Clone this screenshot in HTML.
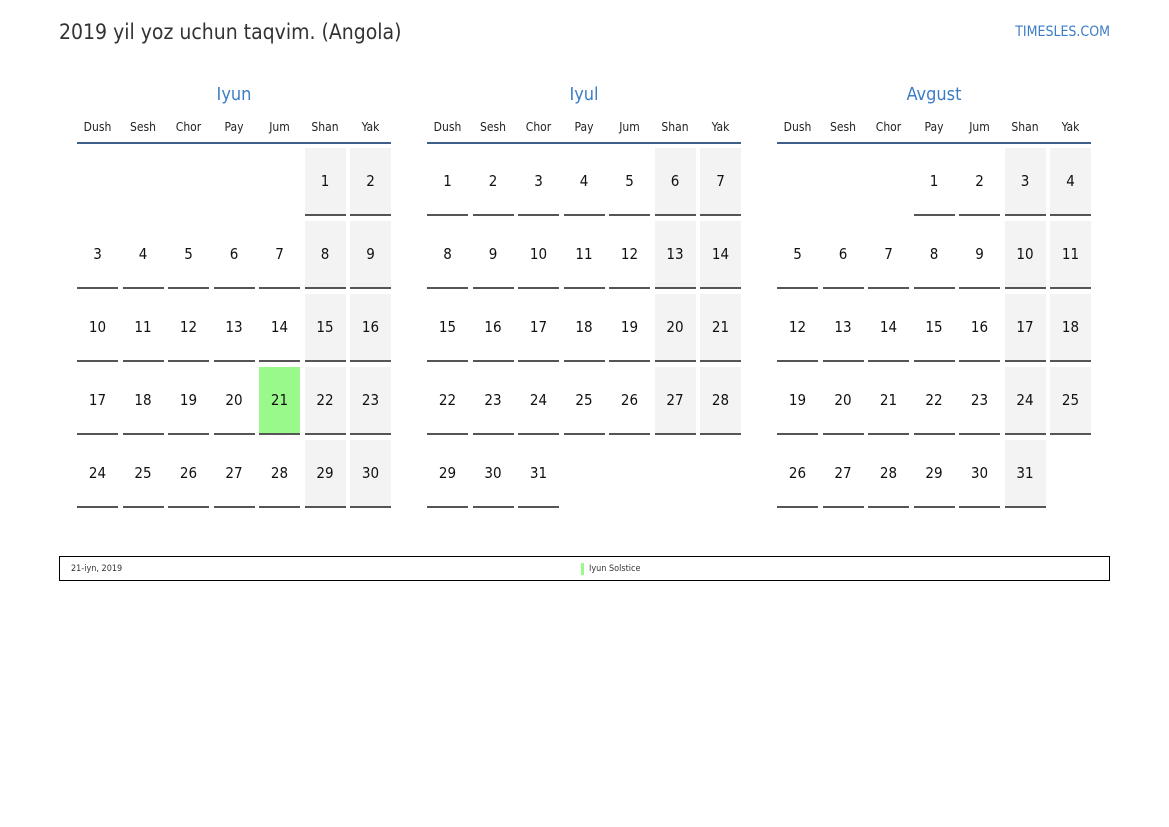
<!DOCTYPE html>
<html><head><meta charset="utf-8"><style>
body{margin:0;width:1169px;height:827px;background:#fff;font-family:"DejaVu Sans","Liberation Sans",sans-serif;font-stretch:condensed;position:relative;overflow:hidden}
.title{position:absolute;left:59px;top:20px;font-size:21px;color:#333}
.logo{position:absolute;right:59px;top:24px;font-size:14px;color:#3b7dc4}
.m{position:absolute;top:84px;width:314px}
.mn{text-align:center;font-size:18px;color:#3b7dc4;height:22px;line-height:22px}
.dn{display:grid;grid-template-columns:repeat(7,41px);column-gap:4.5px;margin-top:9px;font-size:12px;color:#222;height:27px;line-height:24px;border-bottom:2px solid #3d5f8a}
.dn div{text-align:center}
.g{display:grid;grid-template-columns:repeat(7,41px);grid-auto-rows:68px;gap:5px 4.5px;margin-top:4px}
.g div{text-align:center;line-height:66px;font-size:15px;color:#111;border-bottom:2px solid #555}
.g div.e{border:none}
.g div.w{background:#f3f3f3}
.g div.h{background:#99f98a}
.foot{position:absolute;left:59px;top:556px;width:1049px;height:23px;border:1px solid #000;font-size:9px;color:#333}
.foot .a{position:absolute;left:11px;top:7px}
.foot .b{position:absolute;left:521px;padding-left:5px;border-left:3px solid #99f98a;line-height:12px;top:6px}
</style></head><body>
<div class="title">2019 yil yoz uchun taqvim. (Angola)</div>
<div class="logo">TIMESLES.COM</div>

<div class="m" style="left:77px"><div class="mn">Iyun</div>
<div class="dn"><div>Dush</div><div>Sesh</div><div>Chor</div><div>Pay</div><div>Jum</div><div>Shan</div><div>Yak</div></div>
<div class="g">
<div class="e"></div><div class="e"></div><div class="e"></div><div class="e"></div><div class="e"></div><div class="w">1</div><div class="w">2</div>
<div>3</div><div>4</div><div>5</div><div>6</div><div>7</div><div class="w">8</div><div class="w">9</div>
<div>10</div><div>11</div><div>12</div><div>13</div><div>14</div><div class="w">15</div><div class="w">16</div>
<div>17</div><div>18</div><div>19</div><div>20</div><div class="h">21</div><div class="w">22</div><div class="w">23</div>
<div>24</div><div>25</div><div>26</div><div>27</div><div>28</div><div class="w">29</div><div class="w">30</div>
</div></div>

<div class="m" style="left:427px"><div class="mn">Iyul</div>
<div class="dn"><div>Dush</div><div>Sesh</div><div>Chor</div><div>Pay</div><div>Jum</div><div>Shan</div><div>Yak</div></div>
<div class="g">
<div>1</div><div>2</div><div>3</div><div>4</div><div>5</div><div class="w">6</div><div class="w">7</div>
<div>8</div><div>9</div><div>10</div><div>11</div><div>12</div><div class="w">13</div><div class="w">14</div>
<div>15</div><div>16</div><div>17</div><div>18</div><div>19</div><div class="w">20</div><div class="w">21</div>
<div>22</div><div>23</div><div>24</div><div>25</div><div>26</div><div class="w">27</div><div class="w">28</div>
<div>29</div><div>30</div><div>31</div>
</div></div>

<div class="m" style="left:777px"><div class="mn">Avgust</div>
<div class="dn"><div>Dush</div><div>Sesh</div><div>Chor</div><div>Pay</div><div>Jum</div><div>Shan</div><div>Yak</div></div>
<div class="g">
<div class="e"></div><div class="e"></div><div class="e"></div><div>1</div><div>2</div><div class="w">3</div><div class="w">4</div>
<div>5</div><div>6</div><div>7</div><div>8</div><div>9</div><div class="w">10</div><div class="w">11</div>
<div>12</div><div>13</div><div>14</div><div>15</div><div>16</div><div class="w">17</div><div class="w">18</div>
<div>19</div><div>20</div><div>21</div><div>22</div><div>23</div><div class="w">24</div><div class="w">25</div>
<div>26</div><div>27</div><div>28</div><div>29</div><div>30</div><div class="w">31</div>
</div></div>

<div class="foot"><span class="a">21-iyn, 2019</span><span class="b">Iyun Solstice</span></div>
</body></html>
